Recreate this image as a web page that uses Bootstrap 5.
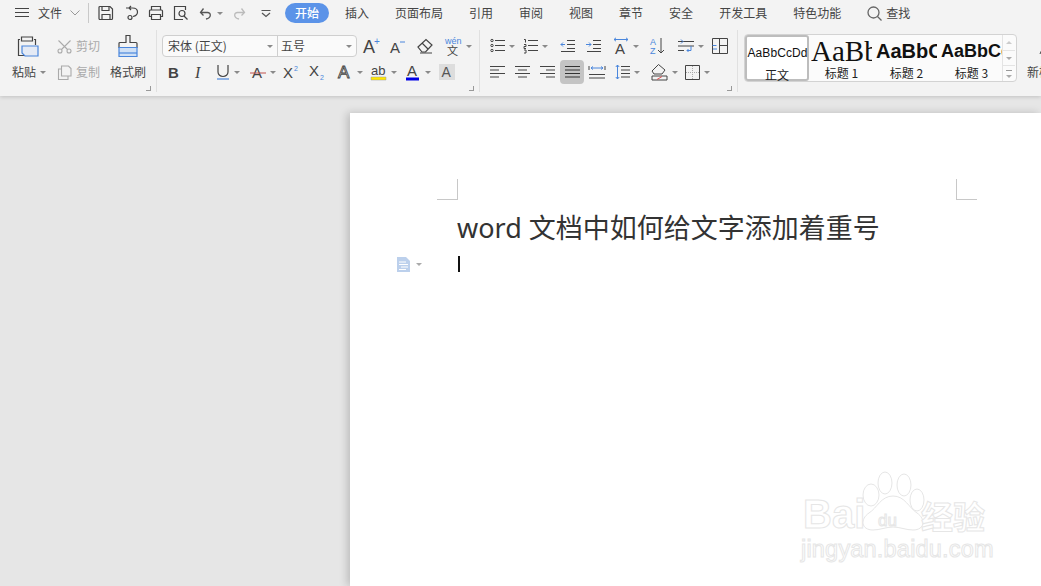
<!DOCTYPE html>
<html lang="zh-CN">
<head>
<meta charset="utf-8">
<title>word 文档</title>
<link href="https://cdn.jsdelivr.net/npm/bootstrap@5.3.0/dist/css/bootstrap.min.css" rel="stylesheet">
<style>
html,body{height:586px;overflow:hidden}
body{background:#e6e6e6;font-family:"Noto Sans CJK SC","Noto Sans",sans-serif;font-size:12px;color:#444;line-height:1}
svg{display:block;flex:none;overflow:visible}
svg text{font-family:"Liberation Sans",sans-serif}
.topzone{background:#f3f3f3;height:96px;box-shadow:0 1px 4px rgba(0,0,0,.16);position:relative}
.titlebar{height:26px;padding-left:14px}
.sepv{width:1px;height:20px;background:#c9c9c9;margin:0 9px 0 8px}
.tabpill{width:44px;height:20px;border-radius:10px;background:#5b93e8;color:#fff;margin-right:16px;font-weight:500}
.tabset{gap:26px}
.ribbonband{height:70px}
.rgroup{height:62px;margin-top:4px;padding-top:4px;border-right:1px solid #e0e0e0;position:relative;flex:none}
.g1{width:157px;padding-left:12px}
.g2{width:323px;padding-left:5px}
.g3{width:258px;padding-left:10px}
.g4{padding-left:6px;flex:1;border-right:0;min-width:0;overflow:hidden}
.ribrow{height:24px}
.ribrow+.ribrow{margin-top:2px}
.pastecol{width:45px}
.cutcol{width:53px}
.brushcol{width:36px}
.bigicon{height:24px;margin-bottom:2px}
.biglabel{height:24px}
.muted2{color:#aaa}
.tri{width:0;height:0;border-left:3px solid transparent;border-right:3px solid transparent;border-top:3px solid #8a8a8a;flex:none}
.launch{position:absolute;right:5px;bottom:1px;width:5px;height:5px;border-right:1px solid #999;border-bottom:1px solid #999}
.fontbox{width:195px;height:22px;border:1px solid #cfcfcf;border-radius:4px;background:#fafafa;margin-left:0;margin-right:6px}
.fontname{width:115px;padding-left:5px;border-right:1px solid #cfcfcf;height:100%}
.fontsize{flex:1;padding-left:3px;height:100%}
.ib{display:flex;align-items:center;gap:4px;flex:none;height:24px}
.bx20{width:20px}.bx24{width:24px}.bx25{width:25px}.bx26{width:26px}.bx27{width:27px}.bx28{width:28px}.bx33{width:33px}.bx34{width:34px}.bx36{width:36px}.bx37{width:37px}
.activebtn{background:#c4c4c4;border-radius:4px;justify-content:center;margin-right:5px}
.row2pad{padding-left:4px}
.gallery{width:273px;height:48px;border:1px solid #d3d3d3;border-radius:4px;background:#fbfbfb;flex:none;margin-right:10px}
.stylecell{width:65px;height:100%;text-align:center;color:#222;flex:none}
.stylecell.current{width:64px;background:#fff;border:2px solid #bdbdbd;border-radius:3px}
.samplebox{height:32px;width:61px;overflow:hidden;white-space:nowrap;margin:0 auto;color:#111}
.samplebody{font:12px "Liberation Sans",sans-serif;letter-spacing:.1px}
.sampleh1{font:29px "Liberation Serif",serif}
.sampleh2{font:bold 20px "Liberation Sans",sans-serif}
.sampleh3{font:bold 18px "Liberation Sans",sans-serif}
.stylelabel{height:13px}
.scrollcol{width:13px;border-left:1px solid #e4e4e4;height:100%;margin-left:-2px}
.scrollcell{flex:1;border-bottom:1px solid #e4e4e4}
.scrollcell:last-child{border-bottom:0}
.trigrey{border-top-color:#aaa}
.triup{border-top:0;border-bottom:3px solid #ccc}
.newstyle{white-space:nowrap;width:40px}
.workarea{height:490px;padding:17px 0 0 350px}
.paper{background:#fff;height:473px;box-shadow:-3px 0 8px rgba(0,0,0,.18);padding:66px 64px 0 87px;position:relative}
.margins{height:21px}
.cropleft{width:21px;height:21px;border-right:1px solid #c8c8c8;border-bottom:1px solid #c8c8c8}
.cropright{width:21px;height:21px;border-left:1px solid #c8c8c8;border-bottom:1px solid #c8c8c8}
.doctitle{font:27px/1 "Noto Sans","Noto Sans CJK SC",sans-serif;color:#333;margin:0;padding:14px 0 0 20px;white-space:nowrap;font-weight:400}
.paraline{height:16px;margin-top:15px;margin-left:-40px}
.paramark{width:60px;gap:6px}
.caret-bar{width:2px;height:16px;background:#111;margin-left:1px}
.stamp{position:absolute;right:50px;bottom:17px}
</style>
</head>
<body>
<header class="topzone">
  <div class="titlebar d-flex align-items-center">
    <svg width="16" height="16" viewBox="0 0 16 16" stroke="#444" stroke-width="1.2"><path d="M1 3.5h14M1 7.5h14M1 11.5h14"/></svg>
    <span class="ms-1 ps-1 flex-none">文件</span>
    <svg class="ms-2" width="10" height="6" viewBox="0 0 10 6" fill="none" stroke="#999"><path d="M.5.5 5 5 9.500.5"/></svg>
    <span class="sepv"></span>
    <span class="ib bx26"><svg width="16" height="16" viewBox="0 0 16 16" fill="none" stroke="#444" stroke-width="1.2"><path d="M2 1.500h10l2.500 2.500v9.500a1 1 0 0 1-1 1H2a1 1 0 0 1-1-1v-11a1 1 0 0 1 1-1z"/><path d="M4 1.500v4h7v-4M4 14.500v-5h8v5"/></svg></span>
    <span class="ib bx24"><svg width="16" height="16" viewBox="0 0 16 16" fill="none" stroke="#444" stroke-width="1.2"><path d="M2 3h6.500c3.500 0 5 2 5 4s-2 4-4.500 4.500M7 1l-2 2 2 2"/><circle cx="6" cy="12.500" r="2"/></svg></span>
    <span class="ib bx25"><svg width="16" height="16" viewBox="0 0 16 16" fill="none" stroke="#444" stroke-width="1.200"><path d="M3.500 5V1.500h9V5M3.500 11.500H1.500V6a1 1 0 0 1 1-1h11a1 1 0 0 1 1 1v5.500h-2"/><path d="M3.500 9.500h9v5h-9z"/></svg></span>
    <span class="ib bx26"><svg width="16" height="16" viewBox="0 0 16 16" fill="none" stroke="#444" stroke-width="1.200"><path d="M10 14.500H1.500v-13h11V5"/><circle cx="9" cy="8.500" r="3"/><path d="m11 11 3.500 3.500"/></svg></span>
    <span class="ib bx33"><svg width="14" height="16" viewBox="0 0 14 16" fill="none" stroke="#555" stroke-width="1.300"><path d="M1.500 7.500h7c3.500 0 4.500 5-1.500 6.500M4.500 3.500l-3 4 3 3"/></svg><span class="tri"></span></span>
    <span class="ib bx26"><svg width="14" height="16" viewBox="0 0 14 16" fill="none" stroke="#bbb" stroke-width="1.300"><path d="M12.500 7.500h-7c-3.500 0-4.500 5 1.500 6.500M9.500 3.500l3 4-3 3"/></svg></span>
    <span class="ib bx27"><svg width="16" height="16" viewBox="0 0 16 16" fill="none" stroke="#555" stroke-width="1.200"><path d="M3.500 5.500h9M4 8l4 3.500L12 8"/></svg></span>
    <span class="tabpill d-flex align-items-center justify-content-center">开始</span>
    <nav class="tabset d-flex align-items-center">
      <span>插入</span><span>页面布局</span><span>引用</span><span>审阅</span><span>视图</span><span>章节</span><span>安全</span><span>开发工具</span><span>特色功能</span>
      <span class="d-flex align-items-center gap-1 muted-find"><svg width="15" height="15" viewBox="0 0 15 15" fill="none" stroke="#666" stroke-width="1.300"><circle cx="6.500" cy="6.500" r="5.500"/><path d="m10.500 10.500 4 4"/></svg><span>查找</span></span>
    </nav>
  </div>
  <div class="ribbonband d-flex">
    <section class="rgroup g1 d-flex">
      <div class="pastecol">
        <div class="bigicon d-flex ps-1"><svg width="24" height="24" viewBox="0 0 24 24" fill="none" stroke="#444" stroke-width="1.200"><path d="M4 5.500H2.500v16H9M18 5.500h1.500V11"/><path d="M5.500 3h11v4h-11z"/><path d="M6 12h16v10H9l-3-3z" fill="#e4eaf5" stroke="#4a86dc"/></svg></div>
        <div class="biglabel d-flex align-items-center gap-1"><span>粘贴</span><span class="tri"></span></div>
      </div>
      <div class="cutcol muted2">
        <div class="ribrow d-flex align-items-center gap-1"><svg width="15" height="15" viewBox="0 0 15 15" fill="none" stroke="#aaa" stroke-width="1.100"><circle cx="3" cy="12" r="2"/><circle cx="12" cy="12" r="2"/><path d="M1.500 1.500 10.500 10.500M13.500 1.500 4.500 10.500"/></svg><span>剪切</span></div>
        <div class="ribrow d-flex align-items-center gap-1"><svg width="15" height="15" viewBox="0 0 15 15" fill="none" stroke="#aaa" stroke-width="1.100"><path d="M4.500 1h7l2.500 2.500V11h-9.500z"/><path d="M4.500 4H1.500v10.500H11V11"/></svg><span>复制</span></div>
      </div>
      <div class="brushcol text-center">
        <div class="bigicon d-flex justify-content-center"><svg width="22" height="24" viewBox="0 0 22 24" fill="none" stroke="#444" stroke-width="1.200"><path d="M9 1.500h4v7h6a1 1 0 0 1 1 1v4H2v-4a1 1 0 0 1 1-1h6z"/><path d="M2 13.500h18v9H2z" fill="#cfe0f5" stroke="#4a86dc"/><path d="M2 19h18" stroke="#4a86dc"/></svg></div>
        <div class="biglabel d-flex align-items-center justify-content-center">格式刷</div>
      </div>
      <span class="launch"></span>
    </section>
    <section class="rgroup g2">
      <div class="ribrow d-flex align-items-center">
        <div class="fontbox d-flex align-items-center flex-none">
          <span class="fontname d-flex align-items-center justify-content-between"><span>宋体 (正文)</span><span class="tri me-1"></span></span>
          <span class="fontsize d-flex align-items-center justify-content-between"><span>五号</span><span class="tri me-1"></span></span>
        </div>
        <span class="ib bx27"><svg width="18" height="18" viewBox="0 0 18 18"><text x="0" y="16" font-size="18" fill="#444">A</text><text x="11" y="8" font-size="10" fill="#4a86dc">+</text></svg></span>
        <span class="ib bx27"><svg width="16" height="18" viewBox="0 0 16 18"><text x="0" y="16" font-size="15" fill="#444">A</text><path d="M10 5h5" stroke="#4a86dc"/></svg></span>
        <span class="ib bx28"><svg width="16" height="16" viewBox="0 0 16 16" fill="none" stroke="#444" stroke-width="1.200"><path d="m1 9 8-7.500 6 5.500-6.500 7H5z"/><path d="m5 5 6 6M3 15h12"/></svg></span>
        <span class="ib"><svg width="17" height="20" viewBox="0 0 17 20"><text x="0" y="8" font-size="9" fill="#4a86dc">wén</text><text x="2" y="19" font-size="11" fill="#444" style="font-family:'Noto Sans CJK SC'">文</text></svg><span class="tri"></span></span>
      </div>
      <div class="ribrow d-flex align-items-center row2pad">
        <span class="ib bx25"><svg width="16" height="16" viewBox="0 0 16 16"><text x="2" y="14" font-size="15" font-weight="bold" fill="#444">B</text></svg></span>
        <span class="ib bx25"><svg width="16" height="16" viewBox="0 0 16 16"><text x="4" y="14" font-size="16" font-style="italic" fill="#444" style="font-family:'Liberation Serif'">I</text></svg></span>
        <span class="ib bx34"><svg width="14" height="16" viewBox="0 0 14 16" fill="none"><path d="M2 1v7a5 4.500 0 0 0 10 0V1" stroke="#444" stroke-width="1.200"/><path d="M1 15h12" stroke="#4a86dc" stroke-width="1.200"/></svg><span class="tri"></span></span>
        <span class="ib bx33"><svg width="16" height="16" viewBox="0 0 16 16"><text x="2" y="14" font-size="15" fill="#444">A</text><path d="M0 9h16" stroke="#c0504d"/></svg><span class="tri"></span></span>
        <span class="ib bx26"><svg width="16" height="16" viewBox="0 0 16 16"><text x="0" y="14" font-size="15" fill="#444">X</text><text x="11" y="7" font-size="7" fill="#4a86dc">2</text></svg></span>
        <span class="ib bx28"><svg width="16" height="16" viewBox="0 0 16 16"><text x="0" y="12" font-size="15" fill="#444">X</text><text x="11" y="16" font-size="7" fill="#4a86dc">2</text></svg></span>
        <span class="ib bx34"><svg width="16" height="16" viewBox="0 0 16 16"><text x="1" y="14" font-size="17" fill="#fff" stroke="#444" stroke-width=".9">A</text></svg><span class="tri"></span></span>
        <span class="ib bx34"><svg width="16" height="18" viewBox="0 0 16 18"><text x="0" y="12" font-size="13" fill="#444">ab</text><path d="M0 14h15v3H0z" fill="#ffe600" stroke="#999" stroke-width=".5"/></svg><span class="tri"></span></span>
        <span class="ib bx34"><svg width="16" height="18" viewBox="0 0 16 18"><text x="2" y="13" font-size="15" fill="#444">A</text><path d="M1 14.500h13v3H1z" fill="#0000e6"/></svg><span class="tri"></span></span>
        <span class="ib"><svg width="16" height="16" viewBox="0 0 16 16"><path d="M0 0h16v16H0z" fill="#ddd"/><text x="2.500" y="13" font-size="14" fill="#555">A</text></svg></span>
      </div>
      <span class="launch"></span>
    </section>
    <section class="rgroup g3">
      <div class="ribrow d-flex align-items-center">
        <span class="ib bx33"><svg width="15" height="16" viewBox="0 0 15 16" fill="none" stroke="#444"><path d="M5 2.500h10M5 7.500h10M5 12.500h10"/><circle cx="2" cy="2.500" r="1.200"/><circle cx="2" cy="7.500" r="1.200"/><circle cx="2" cy="12.500" r="1.200"/></svg><span class="tri"></span></span>
        <span class="ib bx37"><svg width="15" height="16" viewBox="0 0 15 16" fill="none" stroke="#444"><path d="M5 2.500h10M5 7.500h10M5 12.500h10M1 1.500h1.500v3M1 6.500h2v2H1v2h2M1 12h2v3H1"/></svg><span class="tri"></span></span>
        <span class="ib bx26"><svg width="15" height="14" viewBox="0 0 15 14" fill="none" stroke="#444"><path d="M7 1.500h8M7 5.500h8M7 9.500h8M1 12.500h14"/><path d="M5 5.500H.8M3 3.500l-2 2 2 2" stroke="#4a86dc"/></svg></span>
        <span class="ib bx27"><svg width="15" height="14" viewBox="0 0 15 14" fill="none" stroke="#444"><path d="M7 1.500h8M7 5.500h8M7 9.500h8M1 12.500h14"/><path d="M0 5.500h5M3 3.500l2 2-2 2" stroke="#4a86dc"/></svg></span>
        <span class="ib bx37"><svg width="16" height="18" viewBox="0 0 16 18"><path d="M1 2.500h14M3 .8 1 2.500l2 1.700M13 .8l2 1.700-2 1.700" fill="none" stroke="#4a86dc"/><text x="2" y="17" font-size="15" fill="#444">A</text></svg><span class="tri"></span></span>
        <span class="ib bx28"><svg width="16" height="18" viewBox="0 0 16 18"><text x="0" y="8" font-size="9" fill="#4a86dc">A</text><text x="0" y="17" font-size="9" fill="#4a86dc">Z</text><path d="M11 1v15M8 13l3 3 3-3" fill="none" stroke="#444"/></svg></span>
        <span class="ib bx34"><svg width="16" height="16" viewBox="0 0 16 16" fill="none" stroke="#444"><path d="M0 3.500h16M0 8h16M0 12.500h6"/><path d="M13 8v4.500H9M10.500 11 9 12.500l1.500 1.500" stroke="#4a86dc"/><path d="M3 1.500 5 3.500 3 5.500" stroke="#4a86dc"/></svg><span class="tri"></span></span>
        <span class="ib"><svg width="16" height="16" viewBox="0 0 16 16" fill="none" stroke="#444"><path d="M.5.500h15v15H.5zM7.500.500v15M7.500 7.500h8"/><path d="M.5 7.500h4M1 11h4" stroke="#4a86dc"/></svg></span>
      </div>
      <div class="ribrow d-flex align-items-center">
        <span class="ib bx25"><svg width="15" height="12" viewBox="0 0 15 12" stroke="#444"><path d="M0 .5h15M0 4h9M0 7.500h15M0 11h9"/></svg></span>
        <span class="ib bx25"><svg width="15" height="12" viewBox="0 0 15 12" stroke="#444"><path d="M0 .5h15M3 4h9M0 7.500h15M3 11h9"/></svg></span>
        <span class="ib bx20"><svg width="15" height="12" viewBox="0 0 15 12" stroke="#444"><path d="M0 .5h15M6 4h9M0 7.500h15M6 11h9"/></svg></span>
        <span class="ib bx24 activebtn"><svg width="15" height="12" viewBox="0 0 15 12" stroke="#333"><path d="M0 .5h15M0 4h15M0 7.500h15M0 11h15"/></svg></span>
        <span class="ib bx26"><svg width="16" height="14" viewBox="0 0 16 14" fill="none" stroke="#444"><path d="M0 1v4M16 1v4M0 9.500h16M0 13h16"/><path d="M2 3h12M4 1.500 2 3l2 1.500M12 1.500 14 3l-2 1.500" stroke="#4a86dc"/></svg></span>
        <span class="ib bx36"><svg width="15" height="16" viewBox="0 0 15 16" fill="none" stroke="#444"><path d="M6 2.500h9M6 6h9M6 9.500h9M6 13h9"/><path d="M2.500 1v14M.8 3l1.700-2L4.200 3M.8 13l1.700 2 1.700-2" stroke="#4a86dc"/></svg><span class="tri"></span></span>
        <span class="ib bx34"><svg width="17" height="18" viewBox="0 0 17 18" fill="none" stroke="#444"><path d="M1 8 7.500 1.500 14 7l-3 4H3z"/><path d="M1 13h15v4H1z"/><path d="m6 16.500 5-3" stroke="#e05050"/></svg><span class="tri"></span></span>
        <span class="ib"><svg width="15" height="15" viewBox="0 0 15 15" fill="none" stroke="#444"><path d="M.5.500h14v14H.5z"/><path d="M7.500 1v13M1 7.500h13" stroke="#aaa" stroke-dasharray="1 1"/></svg><span class="tri"></span></span>
      </div>
      <span class="launch"></span>
    </section>
    <section class="rgroup g4 d-flex">
      <div class="gallery d-flex">
        <div class="stylecell current">
          <div class="samplebox samplebody d-flex align-items-center justify-content-center">AaBbCcDd</div>
          <div class="stylelabel">正文</div>
        </div>
        <div class="stylecell">
          <div class="samplebox sampleh1">AaBbCcDd</div>
          <div class="stylelabel">标题 1</div>
        </div>
        <div class="stylecell">
          <div class="samplebox sampleh2 d-flex align-items-center">AaBbCcDd</div>
          <div class="stylelabel">标题 2</div>
        </div>
        <div class="stylecell">
          <div class="samplebox sampleh3 d-flex align-items-center">AaBbCcDd</div>
          <div class="stylelabel">标题 3</div>
        </div>
        <div class="scrollcol d-flex flex-column">
          <span class="scrollcell d-flex align-items-center justify-content-center"><span class="tri triup"></span></span>
          <span class="scrollcell d-flex align-items-center justify-content-center"><span class="tri trigrey"></span></span>
          <span class="scrollcell d-flex flex-column align-items-center justify-content-center gap-1"><svg width="6" height="1" viewBox="0 0 6 1" stroke="#999"><path d="M0 .5h6"/></svg><span class="tri trigrey"></span></span>
        </div>
      </div>
      <div class="newstyle">
        <div class="bigicon d-flex ps-2"><svg width="20" height="24" viewBox="0 0 20 24" fill="none" stroke="#444"><path d="M5 20 12 4"/></svg></div>
        <div class="biglabel d-flex align-items-center">新样式</div>
      </div>
    </section>
  </div>
</header>
<main class="workarea">
  <article class="paper">
    <div class="margins d-flex justify-content-between"><span class="cropleft"></span><span class="cropright"></span></div>
    <h1 class="doctitle">word 文档中如何给文字添加着重号</h1>
    <div class="paraline d-flex align-items-center">
      <span class="paramark d-flex align-items-center"><svg width="13" height="15" viewBox="0 0 13 15"><path d="M0 0h9l4 4v11H0z" fill="#bcd0ec"/><path d="M2 5h7M2 7.500h9M4 10h7M2 12.500h7" stroke="#fff"/></svg><span class="tri trigrey"></span></span>
      <span class="caret-bar"></span>
    </div>
    <svg class="stamp" width="190" height="100" viewBox="0 0 190 100" aria-label="Baidu经验">
      <g fill="#fff" stroke="#e6e6e6" stroke-width="1">
        <text x="2" y="59" font-size="40" font-weight="bold">Bai</text>
        <ellipse cx="70" cy="26" rx="8" ry="11"/><ellipse cx="84" cy="14" rx="7" ry="11"/><ellipse cx="103" cy="16" rx="7" ry="11"/><ellipse cx="116" cy="31" rx="7" ry="11"/>
        <path d="M92 27c-12 0-16 12-24 17-9 6-8 17 4 17 7 0 13-3 20-3s13 3 20 3c12 0 13-11 4-17-8-5-12-17-24-17z"/>
        <text x="77" y="57" font-size="17">du</text>
        <text x="120" y="60" font-size="32" style="font-family:'Noto Sans CJK SC'" font-weight="bold">经验</text>
        <text x="0" y="88" font-size="23.500" style="letter-spacing:.2px">jingyan.baidu.com</text>
      </g>
    </svg>
  </article>
</main>
<script src="https://cdn.jsdelivr.net/npm/bootstrap@5.3.0/dist/js/bootstrap.bundle.min.js"></script>
</body>
</html>
